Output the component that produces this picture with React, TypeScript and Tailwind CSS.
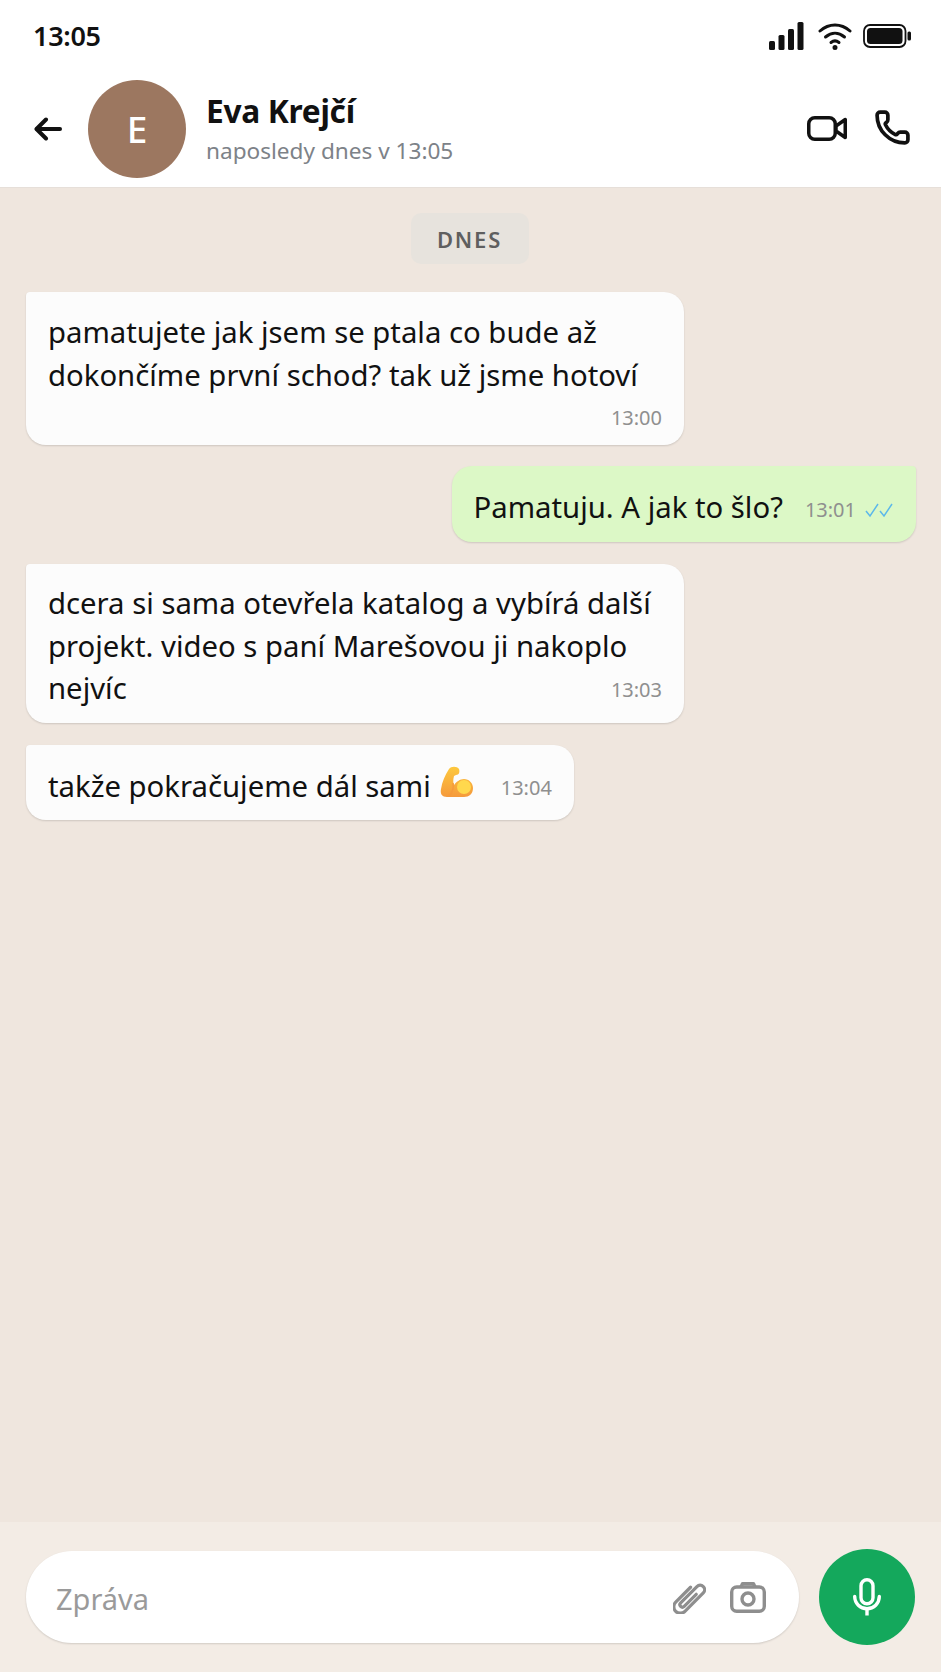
import React from 'react'
import { Phone } from 'lucide-react'

const font = "font-['Noto_Sans',sans-serif]"

function Checks() {
  return (
    <svg width="30" height="18" viewBox="0 0 30 18" fill="none" stroke="#5cb8ea" strokeWidth="1.5" className="ml-2">
      <path d="M2 10l4 5L14 3" />
      <path d="M16 10l4 5L28 3" />
    </svg>
  )
}

function Muscle() {
  return (
    <svg width="33" height="35" viewBox="0 0 33 35" className="ml-[9px] mt-[2px] shrink-0">
      <defs>
        <linearGradient id="arm" x1="0" y1="0" x2="0" y2="1">
          <stop offset="0" stopColor="#fdc83e" />
          <stop offset="1" stopColor="#f59a3c" />
        </linearGradient>
      </defs>
      <path d="M9 3c2-3 8-3 10 0 1 3 0 6-3 6l-2 1c-1 4-1 6 0 9 2-3 6-6 10-6 5 0 9 4 9 9 0 6-4 9-9 9H7c-5 0-7-3-6-8 1-7 4-14 8-20z" fill="url(#arm)" />
      <circle cx="24" cy="21" r="7" fill="#ffd84d" />
      <path d="M9 30c3-3 5-7 4-13" stroke="#f59a3c" strokeWidth="1.5" fill="none" />
    </svg>
  )
}

function Bubble({ children, out, className }: { children: React.ReactNode; out?: boolean; className?: string }) {
  return (
    <div
      className={`${out ? 'bg-[#dcf8c6] rounded-l-[20px] rounded-br-[20px] rounded-tr-[4px] self-end' : 'bg-[#fcfcfc] rounded-r-[20px] rounded-bl-[20px] rounded-tl-[4px] self-start'} shadow-[0_1px_2px_rgba(0,0,0,0.14)] px-[22px] ${className || ''}`}
    >
      {children}
    </div>
  )
}

export default function App() {
  return (
    <div className={`${font} w-[941px] h-[1672px] flex flex-col bg-[#efe6de] text-[#111111] overflow-hidden`}>
      {/* status bar */}
      <div className="h-[72px] shrink-0 bg-white flex items-center justify-between pl-[33px] pr-[30px]">
        <span className="text-[27px] font-semibold tracking-[-0.3px]">13:05</span>
        <div className="flex items-center">
          <svg width="35" height="28" viewBox="0 0 35 28" fill="#111" className="mt-[-1px]">
            <rect x="0" y="19" width="6" height="9" rx="1.5" />
            <rect x="9.500" y="13" width="6" height="15" rx="1.5" />
            <rect x="19" y="7" width="6" height="21" rx="1.5" />
            <rect x="28.500" y="0" width="6" height="28" rx="1.5" />
          </svg>
          <svg width="34" height="28" viewBox="0 0 34 28" fill="none" stroke="#111" strokeWidth="3" strokeLinecap="round" className="ml-[14px] mt-[-1px]">
            <path d="M2 9c9-8 21-8 30 0" />
            <path d="M7.500 15c6-5 13-5 19 0" />
            <path d="M13 20.500c2.500-2 5.500-2 8 0" />
            <circle cx="17" cy="25.500" r="1" fill="#111" />
          </svg>
          <svg width="48" height="24" viewBox="0 0 48 24" fill="none" className="ml-[11px]">
            <rect x="1" y="1" width="41.500" height="22" rx="6" stroke="#111" strokeWidth="1.800" />
            <rect x="4" y="4" width="35.500" height="16" rx="3.500" fill="#111" />
            <rect x="44.500" y="7.500" width="3.500" height="9" rx="1.500" fill="#111" />
          </svg>
        </div>
      </div>

      {/* header */}
      <div className="h-[116px] shrink-0 bg-white border-b border-[#e6dfd9] flex items-start pl-[34px] pr-[30px]">
        <svg width="28" height="24" viewBox="0 0 28 24" fill="none" stroke="#111" strokeWidth="4" strokeLinecap="round" strokeLinejoin="round" className="mt-[45px] shrink-0">
          <path d="M26 12H3" />
          <path d="M12 2.500L2.500 12L12 21.500" />
        </svg>
        <div className="ml-[26px] mt-[8px] w-[98px] h-[98px] rounded-full bg-[#9c7760] flex items-center justify-center text-white text-[37px] font-medium">E</div>
        <div className="ml-[20px] mt-[18px] flex flex-col">
          <span className="text-[31.700px] leading-[42px] font-bold tracking-[-0.3px]">Eva Krejčí</span>
          <span className="text-[22.600px] leading-[32px] mt-[3px] text-[#7d8288]">naposledy dnes v 13:05</span>
        </div>
        <div className="ml-auto mt-[37px] flex items-start gap-[27px]">
          <svg width="40" height="25" viewBox="0 0 40 25" fill="none" stroke="#111" strokeWidth="3.500" strokeLinejoin="round" className="mt-[7px]">
            <rect x="1.750" y="1.750" width="26.500" height="21.500" rx="6" />
            <path d="M29 10L38.250 3.500V21.500L29 15z" />
          </svg>
          <Phone size={37} strokeWidth={2.4} />
        </div>
      </div>

      {/* messages */}
      <div className="flex-1 flex flex-col px-[25px] pt-[25px] text-[29.300px] leading-[42.500px] text-[#111]">
        <div className="self-center -ml-[2px] w-[118px] h-[51px] rounded-[10px] bg-[#e7e3dd] flex items-center justify-center text-[22px] leading-[30px] font-semibold tracking-[1.800px] text-[#5f5f5f]">DNES</div>

        <Bubble className="mt-[28px] ml-[1px] w-[658px] h-[153px] pt-[19px]">
          <div className="whitespace-nowrap">pamatujete jak jsem se ptala co bude až<br />dokončíme první schod? tak už jsme hotoví</div>
          <div className="text-right text-[20px] leading-[26px] text-[#8f8f8f] mt-[9px]">13:00</div>
        </Bubble>

        <Bubble out className="mt-[21px] h-[76px] flex items-center">
          <span className="mt-[7px]">Pamatuju. A jak to šlo?</span>
          <span className="ml-[22px] mt-[12px] text-[20px] text-[#8f8f8f] flex items-center">13:01<Checks /></span>
        </Bubble>

        <Bubble className="mt-[22px] ml-[1px] w-[658px] h-[159px] pt-[18px]">
          <div className="whitespace-nowrap">dcera si sama otevřela katalog a vybírá další<br />projekt. video s paní Marešovou ji nakoplo</div>
          <div className="flex justify-between">
            <span>nejvíc</span>
            <span className="text-[20px] text-[#8f8f8f] mt-[2px]">13:03</span>
          </div>
        </Bubble>

        <Bubble className="mt-[22px] ml-[1px] h-[75px] flex items-center">
          <span className="mt-[7px]">takže pokračujeme dál sami</span>
          <Muscle />
          <span className="ml-[28px] mt-[12px] text-[20px] text-[#8f8f8f]">13:04</span>
        </Bubble>
      </div>

      {/* input */}
      <div className="h-[150px] shrink-0 bg-[#f3ece5] flex items-start px-[26px] pt-[27px]">
        <div className="w-[773px] h-[92px] mt-[2px] rounded-full bg-white shadow-[0_1px_2px_rgba(0,0,0,0.14)] flex items-center pl-[30px] pr-[33px]">
          <span className="text-[29px] text-[#9a9a9a] flex-1 mt-[3px]">Zpráva</span>
          <svg width="33" height="33" viewBox="0 0 33 33" fill="none" stroke="#8e8e8e" strokeWidth="3.200" strokeLinecap="round" className="mr-[24px]">
            <g transform="rotate(45 16.500 16.500) translate(0.500 -3.500)">
              <path d="M9.500 12V33a6.500 6.500 0 0 0 13 0V7a4.500 4.500 0 0 0 -9 0V30a2.500 2.500 0 0 0 5 0V13" />
            </g>
          </svg>
          <svg width="36" height="31" viewBox="0 0 36 31" fill="none" stroke="#8e8e8e" strokeWidth="3.400" strokeLinejoin="round">
            <rect x="1.700" y="5" width="32.600" height="24.300" rx="5" />
            <path d="M11 5l1.500-3.300h11L25 5" />
            <circle cx="18" cy="17" r="6" />
          </svg>
        </div>
        <div className="ml-[20px] w-[96px] h-[96px] rounded-full bg-[#14a85c] flex items-center justify-center">
          <svg width="28" height="39" viewBox="0 0 28 39" fill="none" stroke="#fff" strokeWidth="3.400" strokeLinecap="round">
            <rect x="8" y="1.700" width="12" height="24" rx="6" />
            <path d="M1.700 18.500a12.300 12.300 0 0 0 24.600 0" />
            <path d="M14 31.500V37.500" strokeLinecap="butt" />
          </svg>
        </div>
      </div>
    </div>
  )
}
